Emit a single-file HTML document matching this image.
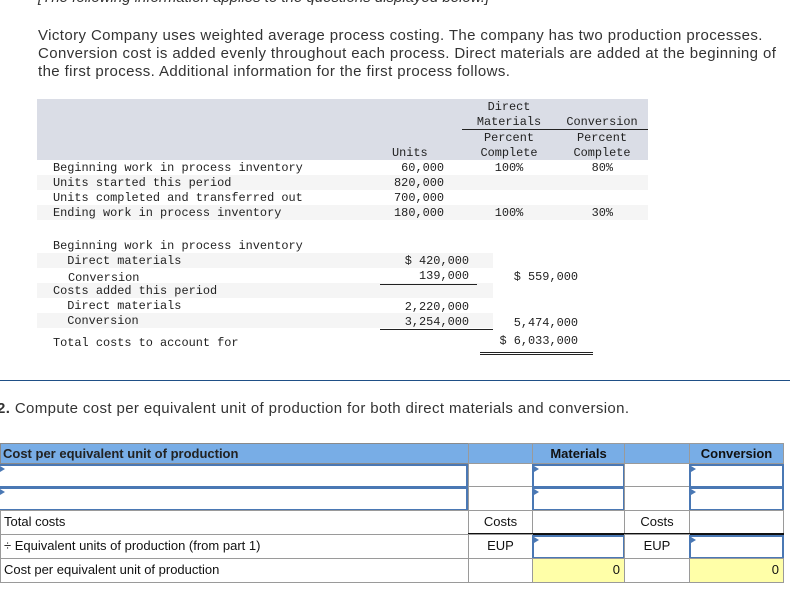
<!DOCTYPE html>
<html><head><meta charset="utf-8"><style>
body{margin:0;width:790px;height:601px;background:#fff;position:relative;overflow:hidden;font-family:"Liberation Sans",sans-serif;color:#222}
.a{position:absolute;white-space:nowrap}
.p{font-size:15px;color:#333;left:38px;letter-spacing:0.4px}
.m{font-family:"Liberation Mono","DejaVu Sans Mono",monospace;font-size:11.9px;color:#222;line-height:15px}
.bg{position:absolute;background:#f5f5f5}
.r{text-align:right}
.c{text-align:center}
.cell{position:absolute;box-sizing:border-box;border:1px solid #9a9a9a;font-size:13px;line-height:22px;color:#111}
.in{position:absolute;box-sizing:border-box;border:2px solid #4a78b4;background:#fff}
.in:before{content:"";position:absolute;left:0;top:0;border-left:5px solid #4a78b4;border-top:3px solid transparent;border-bottom:3px solid transparent}
</style></head><body>
<div class="a" style="left:38px;top:-11px;font-size:15px;font-style:italic;color:#333">[The following information applies to the questions displayed below.]</div>
<div class="a p" style="top:27px">Victory Company uses weighted average process costing. The company has two production processes.</div>
<div class="a p" style="top:45px">Conversion cost is added evenly throughout each process. Direct materials are added at the beginning of</div>
<div class="a p" style="top:63px">the first process. Additional information for the first process follows.</div>

<div class="bg" style="left:37px;top:99px;width:611px;height:61px;background:#dadde6"></div>
<div class="bg" style="left:37px;top:175px;width:611px;height:15px"></div>
<div class="bg" style="left:37px;top:205px;width:611px;height:15px"></div>
<div style="position:absolute;left:462px;top:129px;width:186px;height:1px;background:#222"></div>
<div class="a m c" style="left:470px;top:100px;width:78px">Direct<br>Materials</div>
<div class="a m c" style="left:560px;top:115px;width:84px">Conversion</div>
<div class="a m c" style="left:470px;top:131px;width:78px">Percent<br>Complete</div>
<div class="a m c" style="left:560px;top:131px;width:84px">Percent<br>Complete</div>
<div class="a m" style="left:392px;top:146px">Units</div>
<div class="a m" style="left:53px;top:161px">Beginning work in process inventory<br>Units started this period<br>Units completed and transferred out<br>Ending work in process inventory</div>
<div class="a m r" style="left:360px;top:161px;width:84px">60,000<br>820,000<br>700,000<br>180,000</div>
<div class="a m c" style="left:480px;top:161px;width:58px">100%<br><br><br>100%</div>
<div class="a m r" style="left:560px;top:161px;width:53px">80%<br><br><br>30%</div>

<div class="bg" style="left:37px;top:253px;width:456px;height:15px"></div>
<div class="bg" style="left:37px;top:283px;width:456px;height:15px"></div>
<div class="bg" style="left:37px;top:313px;width:456px;height:15px"></div>
<div class="a m" style="left:53px;top:239px">Beginning work in process inventory<br>&nbsp;&nbsp;Direct materials<br><br>Costs added this period<br>&nbsp;&nbsp;Direct materials<br>&nbsp;&nbsp;Conversion</div>
<div class="a m" style="left:68px;top:271px">Conversion</div>
<div class="a m r" style="left:380px;top:254px;width:89px">$ 420,000</div>
<div class="a m r" style="left:380px;top:269px;width:89px">139,000</div>
<div class="a m r" style="left:480px;top:270px;width:98px">$ 559,000</div>
<div class="a m r" style="left:380px;top:300px;width:89px">2,220,000<br>3,254,000</div>
<div class="a m r" style="left:480px;top:316px;width:98px">5,474,000</div>
<div class="a m" style="left:53px;top:336px">Total costs to account for</div>
<div class="a m r" style="left:480px;top:334px;width:98px">$ 6,033,000</div>
<div style="position:absolute;left:380px;top:284px;width:97px;height:1px;background:#222"></div>
<div style="position:absolute;left:380px;top:329px;width:97px;height:1px;background:#222"></div>
<div style="position:absolute;left:477px;top:329px;width:16px;height:1px;background:#222"></div>
<div style="position:absolute;left:480px;top:352px;width:113px;height:1px;background:#222"></div>
<div style="position:absolute;left:480px;top:354px;width:113px;height:1px;background:#222"></div>

<div style="position:absolute;left:0;top:380px;width:790px;height:1px;background:#1f4f86"></div>
<div class="a" style="left:-3px;top:400px;font-size:15px;color:#333;letter-spacing:0.38px"><b>2.</b> Compute cost per equivalent unit of production for both direct materials and conversion.</div>

<div style="position:absolute;left:0;top:443px;width:783px;height:21px;background:#78ade6;border:1px solid #8a8a8a;box-sizing:border-box"></div>
<div class="a" style="left:3px;top:446px;font-size:13px;font-weight:bold;color:#222">Cost per equivalent unit of production</div>
<div class="cell" style="left:468px;top:443px;width:65px;height:21px;background:#78ade6"></div>
<div class="cell c" style="left:532px;top:443px;width:93px;height:21px;background:#78ade6;font-weight:bold;line-height:20px">Materials</div>
<div class="cell" style="left:624px;top:443px;width:66px;height:21px;background:#78ade6"></div>
<div class="cell c" style="left:689px;top:443px;width:95px;height:21px;background:#78ade6;font-weight:bold;line-height:20px">Conversion</div>

<div class="in" style="left:-2px;top:464px;width:470px;height:24px"></div>
<div class="in" style="left:-2px;top:487px;width:470px;height:24px"></div>
<div class="cell" style="left:468px;top:463px;width:65px;height:24px"></div>
<div class="cell" style="left:468px;top:486px;width:65px;height:25px"></div>
<div class="in" style="left:532px;top:464px;width:93px;height:24px"></div>
<div class="in" style="left:532px;top:487px;width:93px;height:24px"></div>
<div class="cell" style="left:624px;top:463px;width:66px;height:24px"></div>
<div class="cell" style="left:624px;top:486px;width:66px;height:25px"></div>
<div class="in" style="left:689px;top:464px;width:95px;height:24px"></div>
<div class="in" style="left:689px;top:487px;width:95px;height:24px"></div>

<div class="cell" style="left:0;top:510px;width:469px;height:25px;padding-left:3px">Total costs</div>
<div class="cell c" style="left:468px;top:510px;width:65px;height:25px">Costs</div>
<div class="cell" style="left:532px;top:510px;width:93px;height:25px"></div>
<div class="cell c" style="left:624px;top:510px;width:66px;height:25px">Costs</div>
<div class="cell" style="left:689px;top:510px;width:95px;height:25px"></div>
<div style="position:absolute;left:468px;top:533px;width:316px;height:2px;background:#111"></div>

<div class="cell" style="left:0;top:534px;width:469px;height:25px;padding-left:3px">÷ Equivalent units of production (from part 1)</div>
<div class="cell c" style="left:468px;top:534px;width:65px;height:25px">EUP</div>
<div class="in" style="left:532px;top:535px;width:93px;height:24px"></div>
<div class="cell c" style="left:624px;top:534px;width:66px;height:25px">EUP</div>
<div class="in" style="left:689px;top:535px;width:95px;height:24px"></div>

<div class="cell" style="left:0;top:558px;width:469px;height:25px;padding-left:3px">Cost per equivalent unit of production</div>
<div class="cell" style="left:468px;top:558px;width:65px;height:25px"></div>
<div class="cell r" style="left:532px;top:558px;width:93px;height:25px;background:#ffffa8;padding-right:4px">0</div>
<div class="cell" style="left:624px;top:558px;width:66px;height:25px"></div>
<div class="cell r" style="left:689px;top:558px;width:95px;height:25px;background:#ffffa8;padding-right:4px">0</div>
</body></html>
